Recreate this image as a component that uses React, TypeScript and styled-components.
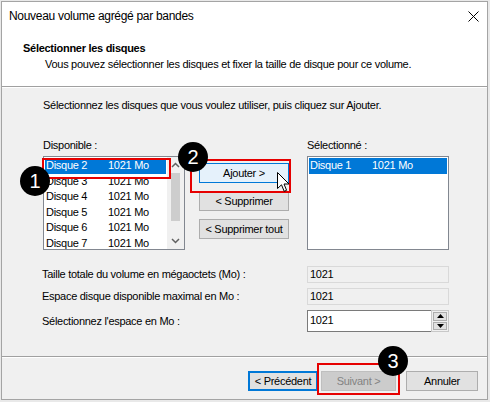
import React from "react";
import styled, { createGlobalStyle } from "styled-components";

const Global = createGlobalStyle`
  html, body { margin: 0; padding: 0; }
  body {
    width: 490px; height: 402px; overflow: hidden;
    background: #e9e9e9;
    font-family: "Liberation Sans", Arial, sans-serif;
    font-size: 11px; color: #000;
    letter-spacing: -0.28px;
  }
  #root { width: 490px; height: 402px; }
`;

const Page = styled.div`
  position: relative;
  width: 490px;
  height: 402px;
  padding: 1px 0 0 1px;
  box-sizing: border-box;
`;

const Window = styled.div`
  width: 487px;
  height: 399px;
  box-sizing: border-box;
  border: 1px solid #a4a4a4;
  background: #f0f0f0;
  display: flex;
  flex-direction: column;
`;

const TitleBar = styled.div`
  height: 28px;
  background: #fff;
  display: flex;
  align-items: center;
  justify-content: space-between;
  padding: 0 8px 0 7px;
  font-size: 12px;
  letter-spacing: -0.3px;
  color: #000;
`;

const Header = styled.div`
  height: 57px;
  background: #fff;
  border-bottom: 1px solid #a0a0a0;
  box-sizing: border-box;
  padding-top: 11px;
  display: flex;
  flex-direction: column;
`;

const HeaderTitle = styled.div`
  font-weight: bold;
  padding-left: 21px;
  line-height: 14px;
`;

const HeaderSub = styled.div`
  padding-left: 43px;
  line-height: 14px;
  margin-top: 2px;
`;

const Body = styled.div`
  flex: 1;
  border-top: 1px solid #fff;
  border-bottom: 1px solid #a0a0a0;
  padding: 11px 0 0 41px;
  display: flex;
  flex-direction: column;
`;

const Line = styled.div`
  line-height: 13px;
`;

const ListsRow = styled.div`
  display: flex;
  margin-top: 27px;
`;

const Column = styled.div<{ $ml?: number }>`
  display: flex;
  flex-direction: column;
  margin-left: ${(p) => p.$ml ?? 0}px;
`;

const ColLabel = styled.div`
  line-height: 13px;
  height: 13px;
  margin-bottom: 4px;
`;

const ListBox = styled.div<{ $w: number }>`
  width: ${(p) => p.$w}px;
  height: 94px;
  box-sizing: border-box;
  border: 1px solid #828790;
  background: #fff;
  display: flex;
  overflow: hidden;
`;

const Items = styled.div`
  flex: 1;
  padding: 1px 1px 0 1px;
  display: flex;
  flex-direction: column;
`;

const Item = styled.div<{ $sel?: boolean }>`
  display: flex;
  height: 15.6px;
  line-height: 15.6px;
  padding-left: 1px;
  background: ${(p) => (p.$sel ? "#0078d7" : "transparent")};
  color: ${(p) => (p.$sel ? "#fff" : "#000")};
  white-space: nowrap;
`;

const ItemName = styled.span`
  width: 62px;
`;

const ScrollBar = styled.div`
  width: 17px;
  background: #f0f0f0;
  display: flex;
  flex-direction: column;
  align-items: center;
`;

const ScrollArrow = styled.div`
  height: 16px;
  width: 17px;
  display: flex;
  align-items: center;
  justify-content: center;
`;

const ScrollTrack = styled.div`
  flex: 1;
  width: 17px;
  display: flex;
  flex-direction: column;
  align-items: center;
`;

const Thumb = styled.div`
  width: 9px;
  height: 48px;
  background: #cdcdcd;
`;

const ButtonsCol = styled.div`
  display: flex;
  flex-direction: column;
  gap: 8px;
  margin-left: 14px;
  padding-top: 24px;
`;

const Btn = styled.div<{ $w: number; $variant?: "hover" | "default" | "disabled" }>`
  width: ${(p) => p.$w}px;
  height: 20px;
  box-sizing: border-box;
  display: flex;
  align-items: center;
  justify-content: center;
  white-space: nowrap;
  border: 1px solid
    ${(p) =>
      p.$variant === "hover" || p.$variant === "default"
        ? "#0078d7"
        : p.$variant === "disabled"
        ? "#bfbfbf"
        : "#adadad"};
  background: ${(p) =>
    p.$variant === "hover" ? "#e5f1fb" : p.$variant === "disabled" ? "#cccccc" : "#e1e1e1"};
  color: ${(p) => (p.$variant === "disabled" ? "#838383" : "#000")};
  ${(p) => (p.$variant === "default" ? "box-shadow: inset 0 0 0 1px #0078d7;" : "")}
`;

const FieldRow = styled.div<{ $mt: number }>`
  display: flex;
  align-items: center;
  margin-top: ${(p) => p.$mt}px;
  margin-left: -1px;
`;

const FieldLabel = styled.div`
  width: 265px;
  line-height: 13px;
`;

const ReadField = styled.div`
  width: 142px;
  height: 17px;
  box-sizing: border-box;
  border: 1px solid #d9d9d9;
  background: #f0f0f0;
  padding-left: 2px;
  line-height: 15px;
`;

const SpinWrap = styled.div`
  display: flex;
  width: 142px;
  height: 22px;
`;

const SpinInput = styled.div`
  flex: 1;
  box-sizing: border-box;
  border: 1px solid #7a7a7a;
  border-right: none;
  background: #fff;
  padding-left: 2px;
  line-height: 18px;
`;

const SpinButtons = styled.div`
  width: 18px;
  box-sizing: border-box;
  border: 1px solid #c8c8c8;
  background: #f0f0f0;
  display: flex;
  flex-direction: column;
  gap: 1px;
  padding: 1px;
`;

const SpinBtn = styled.div`
  flex: 1;
  background: #e1e1e1;
  border: 1px solid #adadad;
  display: flex;
  align-items: center;
  justify-content: center;
`;

const Footer = styled.div`
  border-top: 1px solid #fff;
  height: 42px;
  display: flex;
  justify-content: flex-end;
  align-items: flex-start;
  padding: 13px 9px 0 0;
  box-sizing: border-box;
`;

const FooterGap = styled.div<{ $w: number }>`
  width: ${(p) => p.$w}px;
`;

const Badge = styled.div<{ $x: number; $y: number }>`
  position: absolute;
  left: ${(p) => p.$x - 15}px;
  top: ${(p) => p.$y - 15}px;
  width: 30px;
  height: 30px;
  border-radius: 50%;
  background: #000;
  color: #fff;
  font-size: 20px;
  letter-spacing: 0;
  display: flex;
  align-items: center;
  justify-content: center;
  line-height: 1;
`;

const RedBox = styled.div<{ $x: number; $y: number; $w: number; $h: number }>`
  position: absolute;
  left: ${(p) => p.$x}px;
  top: ${(p) => p.$y}px;
  width: ${(p) => p.$w}px;
  height: ${(p) => p.$h}px;
  box-sizing: border-box;
  border: 2px solid #e60000;
`;

const Cursor = styled.svg`
  position: absolute;
  left: 277px;
  top: 172px;
`;

const Chevron = ({ up }: { up?: boolean }) => (
  <svg width="9" height="6" viewBox="0 0 9 6">
    <path
      d={up ? "M1 5 L4.5 1.5 L8 5" : "M1 1 L4.5 4.5 L8 1"}
      fill="none"
      stroke="#606060"
      strokeWidth="1.5"
    />
  </svg>
);

const Tri = ({ up }: { up?: boolean }) => (
  <svg width="7" height="4" viewBox="0 0 7 4">
    <path d={up ? "M0 4 L3.5 0 L7 4 Z" : "M0 0 L3.5 4 L7 0 Z"} fill="#000" />
  </svg>
);

const available = ["Disque 2", "Disque 3", "Disque 4", "Disque 5", "Disque 6", "Disque 7"];

export default function App() {
  return (
    <>
      <Global />
      <Page>
        <Window>
          <TitleBar>
            <span>Nouveau volume agrégé par bandes</span>
            <svg width="11" height="11" viewBox="0 0 11 11">
              <path d="M0.5 0.5 L10.5 10.5 M10.5 0.5 L0.5 10.5" stroke="#000" strokeWidth="1" />
            </svg>
          </TitleBar>
          <Header>
            <HeaderTitle>Sélectionner les disques</HeaderTitle>
            <HeaderSub>
              Vous pouvez sélectionner les disques et fixer la taille de disque pour ce volume.
            </HeaderSub>
          </Header>
          <Body>
            <Line>Sélectionnez les disques que vous voulez utiliser, puis cliquez sur Ajouter.</Line>
            <ListsRow>
              <Column>
                <ColLabel>Disponible :</ColLabel>
                <ListBox $w={142}>
                  <Items>
                    {available.map((d, i) => (
                      <Item key={d} $sel={i === 0}>
                        <ItemName>{d}</ItemName>
                        <span>1021 Mo</span>
                      </Item>
                    ))}
                  </Items>
                  <ScrollBar>
                    <ScrollArrow>
                      <Chevron up />
                    </ScrollArrow>
                    <ScrollTrack>
                      <Thumb />
                    </ScrollTrack>
                    <ScrollArrow>
                      <Chevron />
                    </ScrollArrow>
                  </ScrollBar>
                </ListBox>
              </Column>
              <ButtonsCol>
                <Btn $w={90} $variant="hover">Ajouter &gt;</Btn>
                <Btn $w={90}>&lt; Supprimer</Btn>
                <Btn $w={90}>&lt; Supprimer tout</Btn>
              </ButtonsCol>
              <Column $ml={18}>
                <ColLabel>Sélectionné :</ColLabel>
                <ListBox $w={142}>
                  <Items>
                    <Item $sel>
                      <ItemName>Disque 1</ItemName>
                      <span>1021 Mo</span>
                    </Item>
                  </Items>
                </ListBox>
              </Column>
            </ListsRow>
            <FieldRow $mt={16}>
              <FieldLabel>Taille totale du volume en mégaoctets (Mo) :</FieldLabel>
              <ReadField>1021</ReadField>
            </FieldRow>
            <FieldRow $mt={5}>
              <FieldLabel>Espace disque disponible maximal en Mo :</FieldLabel>
              <ReadField>1021</ReadField>
            </FieldRow>
            <FieldRow $mt={5}>
              <FieldLabel>Sélectionnez l'espace en Mo :</FieldLabel>
              <SpinWrap>
                <SpinInput>1021</SpinInput>
                <SpinButtons>
                  <SpinBtn>
                    <Tri up />
                  </SpinBtn>
                  <SpinBtn>
                    <Tri />
                  </SpinBtn>
                </SpinButtons>
              </SpinWrap>
            </FieldRow>
          </Body>
          <Footer>
            <Btn $w={70} $variant="default">&lt; Précédent</Btn>
            <FooterGap $w={3} />
            <Btn $w={75} $variant="disabled">Suivant &gt;</Btn>
            <FooterGap $w={10} />
            <Btn $w={72}>Annuler</Btn>
          </Footer>
        </Window>

        <RedBox $x={42} $y={158} $w={129} $h={21} />
        <RedBox $x={190} $y={159} $w={101} $h={34} />
        <RedBox $x={317} $y={363} $w={83} $h={32} />
        <Badge $x={35} $y={181}>1</Badge>
        <Badge $x={193} $y={157}>2</Badge>
        <Badge $x={393} $y={361}>3</Badge>
        <Cursor width="13" height="21" viewBox="0 0 13 21">
          <path
            d="M0.5 0.5 L0.5 16.5 L4.5 12.8 L7.2 19.3 L9.6 18.3 L7 12 L12 12 Z"
            fill="#fff"
            stroke="#000"
            strokeWidth="1"
            strokeLinejoin="round"
          />
        </Cursor>
      </Page>
    </>
  );
}
